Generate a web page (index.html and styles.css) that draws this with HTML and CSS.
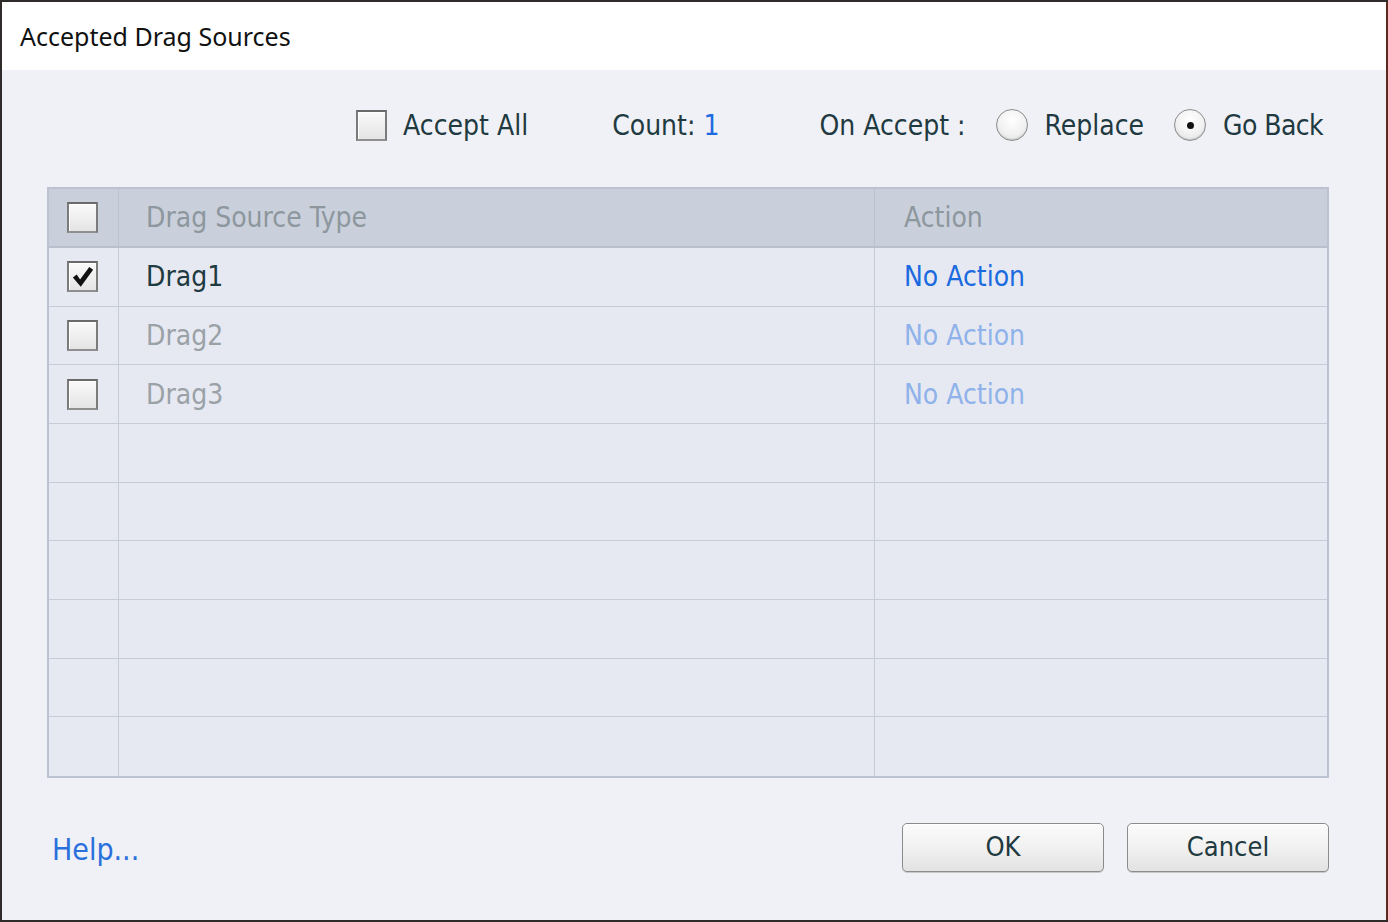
FILE: index.html
```html
<!DOCTYPE html>
<html>
<head>
<meta charset="utf-8">
<link rel="stylesheet" href="styles.css">
</head>
<body>
<div class="dialog">
  <div class="titlebar">Accepted Drag Sources</div>
  <div class="content">
    <div class="options">
      <span class="cb"></span>
      <span class="lbl accept-all">Accept All</span>
      <span class="lbl count">Count: <span class="num">1</span></span>
      <span class="lbl on-accept">On Accept :</span>
      <span class="radio"></span>
      <span class="lbl replace">Replace</span>
      <span class="radio on"></span>
      <span class="lbl go-back">Go Back</span>
    </div>

    <div class="table">
      <div class="cell head c1"><span class="cb"></span></div>
      <div class="cell head c2">Drag Source Type</div>
      <div class="cell head c3">Action</div>

      <div class="cell c1"><span class="cb checked"><svg viewBox="0 0 28 28" width="28" height="28"><path d="M4 14.5 L8 11.5 L11.5 16.5 L21 3.5 L25 6.5 L12.2 24 Z" fill="#111"/></svg></span></div>
      <div class="cell c2 txt">Drag1</div>
      <div class="cell c3 link">No Action</div>

      <div class="cell c1"><span class="cb"></span></div>
      <div class="cell c2 txt dim">Drag2</div>
      <div class="cell c3 link dim">No Action</div>

      <div class="cell c1"><span class="cb"></span></div>
      <div class="cell c2 txt dim">Drag3</div>
      <div class="cell c3 link dim">No Action</div>

      <div class="cell c1"></div><div class="cell c2"></div><div class="cell c3"></div>
      <div class="cell c1"></div><div class="cell c2"></div><div class="cell c3"></div>
      <div class="cell c1"></div><div class="cell c2"></div><div class="cell c3"></div>
      <div class="cell c1"></div><div class="cell c2"></div><div class="cell c3"></div>
      <div class="cell c1"></div><div class="cell c2"></div><div class="cell c3"></div>
      <div class="cell c1 last"></div><div class="cell c2 last"></div><div class="cell c3 last"></div>
    </div>

    <div class="footer">
      <span class="help">Help...</span>
      <div class="buttons">
        <button class="btn">OK</button>
        <button class="btn">Cancel</button>
      </div>
    </div>
  </div>
</div>
</body>
</html>
```

FILE: styles.css
```css
html, body {
  margin: 0;
  padding: 0;
  width: 1388px;
  height: 922px;
  overflow: hidden;
  background: #2e2b2a;
}

.dialog {
  margin: 2px 2px 0 2px;
  width: 1384px;
  height: 918px;
  background: #eff1f7;
  display: flex;
  flex-direction: column;
  box-shadow: 2px 0 0 #5a2a1f;
}

.titlebar {
  height: 68px;
  background: #ffffff;
  font-family: "Noto Sans", "Open Sans", sans-serif;
  font-size: 25px;
  color: #111;
  padding-left: 18px;
  line-height: 68px;
  box-sizing: border-box;
}

.content {
  flex: 1;
  display: flex;
  flex-direction: column;
  padding: 0 57px 0 45px;
  font-family: "DejaVu Sans Condensed", "DejaVu Sans", sans-serif;
  color: #1f3a40;
}

.options {
  margin-top: 38px;
  height: 34px;
  display: flex;
  align-items: center;
  justify-content: flex-end;
  padding-right: 6px;
  font-size: 28px;
}

.lbl { white-space: nowrap; }
.options .cb { margin-right: 16px; }
.accept-all { margin-right: 84px; }
.count { margin-right: 100px; }
.num { color: #1b6ae0; }
.on-accept { margin-right: 30px; }
.replace { margin-right: 30px; }
.go-back { letter-spacing: -0.6px; }

.radio {
  width: 30px;
  height: 30px;
  border-radius: 50%;
  border: 1px solid #8d8d8d;
  background: radial-gradient(circle at 50% 35%, #ffffff 0%, #f1f1f1 55%, #dcdcdc 100%);
  box-shadow: inset 0 -1px 1px rgba(0,0,0,0.15);
  margin-right: 17px;
  display: flex;
  align-items: center;
  justify-content: center;
  flex: none;
}
.radio.on::after {
  content: "";
  width: 7px;
  height: 7px;
  border-radius: 50%;
  background: #111;
}

.cb {
  width: 27px;
  height: 27px;
  border: 2px solid #7b7b7b;
  border-top-color: #6a6a6a;
  border-bottom-color: #8f8f8f;
  background: linear-gradient(#fafafa, #e4e4e4);
  box-shadow: inset 1px 1px 0 #fff;
  display: inline-flex;
  align-items: center;
  justify-content: center;
  flex: none;
  overflow: hidden;
}
.cb svg { display: block; }

.table {
  margin-top: 45px;
  border: 2px solid #bcc2d1;
  display: grid;
  grid-template-columns: 70px 756px 1fr;
  grid-template-rows: 59px repeat(9, 58.67px);
  background: #e6e9f1;
  font-size: 28px;
}

.cell {
  border-bottom: 1px solid #c7ccd8;
  display: flex;
  align-items: center;
  box-sizing: border-box;
  white-space: nowrap;
}
.cell.last { border-bottom: 0; }
.c1 { border-right: 1px solid #c7ccd8; justify-content: center; padding-right: 2px; }
.c2 { border-right: 1px solid #c7ccd8; padding-left: 27px; }
.c3 { padding-left: 29px; }

.head {
  background: #c9d0dc;
  border-bottom: 2px solid #b8bfcd;
  color: #8d979d;
}
.head.c1, .head.c2 { border-right-color: #bcc3d0; }

.txt { color: #1f3a40; }
.txt.dim { color: #9aa1a7; }
.link { color: #1b6ae0; }
.link.dim { color: #8fb2ea; }

.footer {
  margin-top: 45px;
  display: flex;
  align-items: center;
  justify-content: space-between;
}

.help {
  margin-left: 5px;
  margin-top: 4px;
  font-size: 30px;
  color: #2a70dc;
}

.buttons {
  display: flex;
  gap: 23px;
}

.btn {
  width: 202px;
  height: 49px;
  border: 1px solid #8b8b8b;
  border-radius: 5px;
  background: linear-gradient(#fbfbfb 0%, #f1f1f1 50%, #e2e2e2 100%);
  box-shadow: inset 0 1px 0 #fff, 0 1px 0 #c8c8c8;
  font-family: "DejaVu Sans Condensed", "DejaVu Sans", sans-serif;
  font-size: 27px;
  color: #1f3a40;
  padding: 0;
  padding-bottom: 2px;
}
```
